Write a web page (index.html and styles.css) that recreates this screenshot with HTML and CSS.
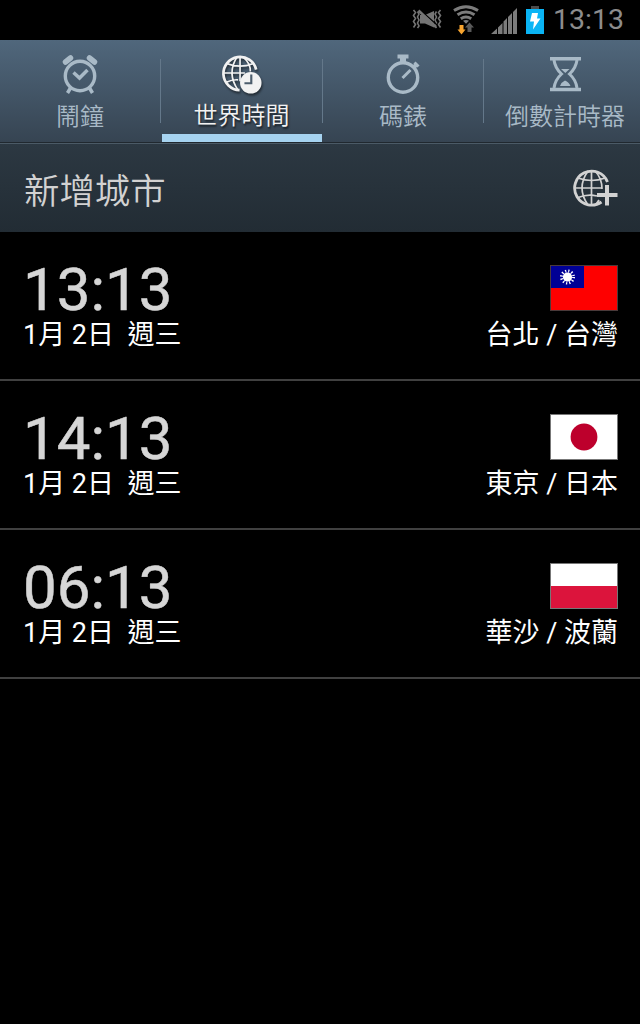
FILE: index.html
```html
<!DOCTYPE html>
<html lang="zh-Hant">
<head>
    <meta charset="UTF-8">
    <meta name="viewport" content="width=device-width, initial-scale=1.0">
    <title>世界時間</title>
    <link rel="stylesheet" href="styles.css">
</head>
<body>

    <div class="status-bar">
        <svg class="status-icons" width="136" height="40" viewBox="410 0 136 40">
            <!-- vibrate / mute -->
            <g fill="none" stroke="#747474" stroke-width="1.6">
                <path d="M413.500 10l2 2.500-2 3 2 3-2 3 2 3-2 3M417.500 11.500l1.500 2.500-1.500 3 1.500 3-1.500 3 1.500 3-1.500 2M440.500 10l-2 2.500 2 3-2 3 2 3-2 3 2 3M436.500 11.500l-1.500 2.500 1.500 3-1.500 3 1.500 3-1.500 3 1.500 2"/>
            </g>
            <path fill="#747474" d="M420 15h5l9-4v16.500l-9-4h-5z"/>
            <path stroke="#000" stroke-width="1.500" d="M420 10l17 15"/>
            <path stroke="#747474" stroke-width="2.500" d="M418.500 10.500l17.500 16.500"/>
            <!-- wifi -->
            <g fill="none" stroke="#7c7c7c" stroke-width="3">
                <path d="M454 10.500q12-7.500 24 0M457.500 14.800q8.500-5.500 17 0M460.800 18.800q5.200-3.500 10.400 0"/>
            </g>
            <path fill="#7c7c7c" d="M463 20.800q3-1.500 6 0l-3 3z"/>
            <path fill="#f7a42f" d="M459.500 25h4v4.500h2l-4 5-4-5h2z"/>
            <path fill="#5a5a5a" d="M467.500 32v-4.500h-2.500l4.500-5 4.500 5h-2.500V32z"/>
            <!-- signal -->
            <path fill="#7c7c7c" d="M491 34l6-5.500V34zM498 34v-6.500l4.500-4.500V34zM503.500 34V21.500l3.500-3.500V34zM508 34V17l4-4V34zM513 34V12l4-4v26z"/>
            <!-- battery -->
            <path fill="#4c4c4c" d="M531 6h8v3h-8z"/>
            <path fill="#0ab4f5" d="M526 9h18v25h-18z"/>
            <path fill="#fff" d="M532 13h6l-1 5.500h3.500l-7.500 11 1-8h-4z"/>
        </svg>
        <span class="status-time">13:13</span>
    </div>

    <div class="tabs">
        <div class="tab">
            <svg width="44" height="44" viewBox="58 52 44 44" fill="none" stroke="currentColor">
                <circle cx="80" cy="76" r="14.700" stroke-width="3.400"/>
                <path stroke-width="5.500" stroke-linecap="round" d="M65.500 62l5-4M94.500 62l-5-4"/>
                <path stroke-width="3.500" d="M70.500 88l-3 5M89.500 88l3 5M73.500 72.500l6 5.500 8-8"/>
            </svg>
            <span>鬧鐘</span>
        </div>
        <div class="tab active">
            <svg width="44" height="44" viewBox="220 52 44 44" fill="none" stroke="currentColor">
                <path stroke-width="2.800" d="M256.500 70a17 17 0 1 0-17 21"/>
                <path stroke-width="1.700" d="M240 57v25M223 73.500h22M227 64q13 5 26 0M226 83q6-3 12-2.500M237 57q-11 17 1 34M243 57q8 7 7.500 15"/>
                <circle cx="251" cy="83.500" r="11" fill="currentColor" stroke="none"/>
                <path stroke="#4c5d6c" stroke-width="2.200" d="M251.500 75v9h-7"/>
            </svg>
            <span>世界時間</span>
        </div>
        <div class="tab">
            <svg width="44" height="44" viewBox="381 52 44 44" fill="none" stroke="currentColor">
                <circle cx="403" cy="77.500" r="14.700" stroke-width="3.400"/>
                <path fill="currentColor" stroke="none" d="M397.500 54.500h11v4H406v4h-6v-4h-2.500z"/>
                <path stroke-width="4" d="M413 68l4-4"/>
                <path stroke-width="3" d="M414.500 62.500l4 4M402.500 78l8-8"/>
            </svg>
            <span>碼錶</span>
        </div>
        <div class="tab">
            <svg width="44" height="44" viewBox="543 52 44 44" fill="none" stroke="currentColor">
                <path stroke-width="3.400" d="M550 58.700h31M550 89.500h31"/>
                <path stroke-width="3" d="M554 60q1 8 7.500 14-6.500 6-7.500 14M577 60q-1 8-7.500 14 6.500 6 7.500 14"/>
                <path fill="currentColor" stroke="none" d="M561 69h8.500l-4.200 4zM560 86q1.500-4 5-5.500 4 1.500 5.500 5.500z"/>
            </svg>
            <span>倒數計時器</span>
        </div>
    </div>

    <div class="add-city">
        <span>新增城市</span>
        <svg width="46" height="40" viewBox="572 168 46 40" fill="none" stroke="currentColor">
            <path stroke-width="2.800" d="M607.500 182a17 17 0 1 0-6 20"/>
            <path stroke-width="1.700" d="M591.500 170v35M574 188h28M578 178q13.500 5 27 0M578 197.500q10-4 19-1.500M588 171q-12 17 0 34M595 171q7 7 7 18M595 205q3-3 4-5"/>
            <path stroke-width="4" d="M607 185v20.500M597 195h20.500"/>
        </svg>
    </div>

    <div class="cities">
        <div class="city">
            <div class="left">
                <div class="time">13:13</div>
                <div class="date">1月 2日&nbsp; 週三</div>
            </div>
            <div class="right">
                <svg class="flag" width="68" height="46" viewBox="0 0 68 46">
                    <rect x=".5" y=".5" width="67" height="45" fill="#fe0000" stroke="#4a3a3a"/>
                    <path fill="#000095" d="M1 1h33v22H1z"/>
                    <circle cx="17.500" cy="12" r="6" fill="none" stroke="#fff" stroke-width="3" stroke-dasharray="1.200 1.942"/>
                    <circle cx="17.500" cy="12" r="4.600" fill="#fff"/>
                </svg>
                <div class="name">台北 / 台灣</div>
            </div>
        </div>
        <div class="city">
            <div class="left">
                <div class="time">14:13</div>
                <div class="date">1月 2日&nbsp; 週三</div>
            </div>
            <div class="right">
                <svg class="flag" width="68" height="46" viewBox="0 0 68 46">
                    <rect x=".5" y=".5" width="67" height="45" fill="#fff" stroke="#777"/>
                    <circle cx="34" cy="23" r="13.400" fill="#bd002c"/>
                </svg>
                <div class="name">東京 / 日本</div>
            </div>
        </div>
        <div class="city">
            <div class="left">
                <div class="time">06:13</div>
                <div class="date">1月 2日&nbsp; 週三</div>
            </div>
            <div class="right">
                <svg class="flag" width="68" height="46" viewBox="0 0 68 46">
                    <rect x=".5" y=".5" width="67" height="45" fill="#fff" stroke="#777"/>
                    <path fill="#dc143c" d="M1 23h66v22H1z"/>
                </svg>
                <div class="name">華沙 / 波蘭</div>
            </div>
        </div>
    </div>

</body>
</html>
```
FILE: styles.css
```css
* { box-sizing: border-box; }
body { margin: 0; min-height: 1024px; background-color: #000; color: #fff; font-family: Roboto, "Noto Sans CJK TC", sans-serif; }
svg { display: block; }

.status-bar { display: flex; justify-content: flex-end; height: 40px; padding-right: 16px; }
.status-time { width: 78px; text-align: right; font-size: 28.5px; line-height: 40px; color: #8c8c8c; }

.tabs { display: flex; height: 103px; overflow: hidden; background: linear-gradient(#50677c, #364452); border-bottom: 1px solid #20282f; }
/* four tabs, the last one runs a little past the right edge */
.tab { flex: 0 0 162px; display: flex; flex-direction: column; align-items: center; padding: 12px 2px 0 0; color: #a9bac7; font-size: 24px; font-weight: 350; line-height: 36px; white-space: nowrap;
    background: linear-gradient(#64788a, #64788a) right 1px top 19px / 1px 64px no-repeat; }
.tab:last-child { padding-right: 4px; background: none; }
.tab span { margin-top: 3px; }
.tab.active { flex-basis: 160px; margin-right: 2px; padding-right: 1px; background: none; border-bottom: 8px solid #a6d3f0; color: #f2f2f2; text-shadow: 1px 2px 2px rgba(0, 0, 0, 0.6); }
.tab.active svg { filter: drop-shadow(1px 2px 1px rgba(0, 0, 0, 0.5)); }
.tab.active + .tab { margin-left: -2px; flex-basis: 164px;
    background: linear-gradient(#64788a, #64788a) left 0 top 19px / 1px 64px no-repeat, linear-gradient(#64788a, #64788a) right 2px top 19px / 1px 64px no-repeat; }

.add-city { display: flex; justify-content: space-between; align-items: center; height: 89px; padding: 0 22px 0 24px; background: linear-gradient(#2c3842, #222c34); border-top: 1px solid #4b5a66; color: #d2d2d2; font-size: 35.4px; font-weight: 350; }

.city { display: flex; justify-content: space-between; height: 149px; padding: 33px 22px 0 23px; border-bottom: 2px solid #404040; }
.time { font-size: 60px; line-height: 49px; color: #d6d6d6; -webkit-text-stroke: 0.5px #d6d6d6; }
.date, .name { font-size: 27px; line-height: 42px; white-space: nowrap; }
.right { display: flex; flex-direction: column; align-items: flex-end; }
.name { margin-top: 3px; }
```
